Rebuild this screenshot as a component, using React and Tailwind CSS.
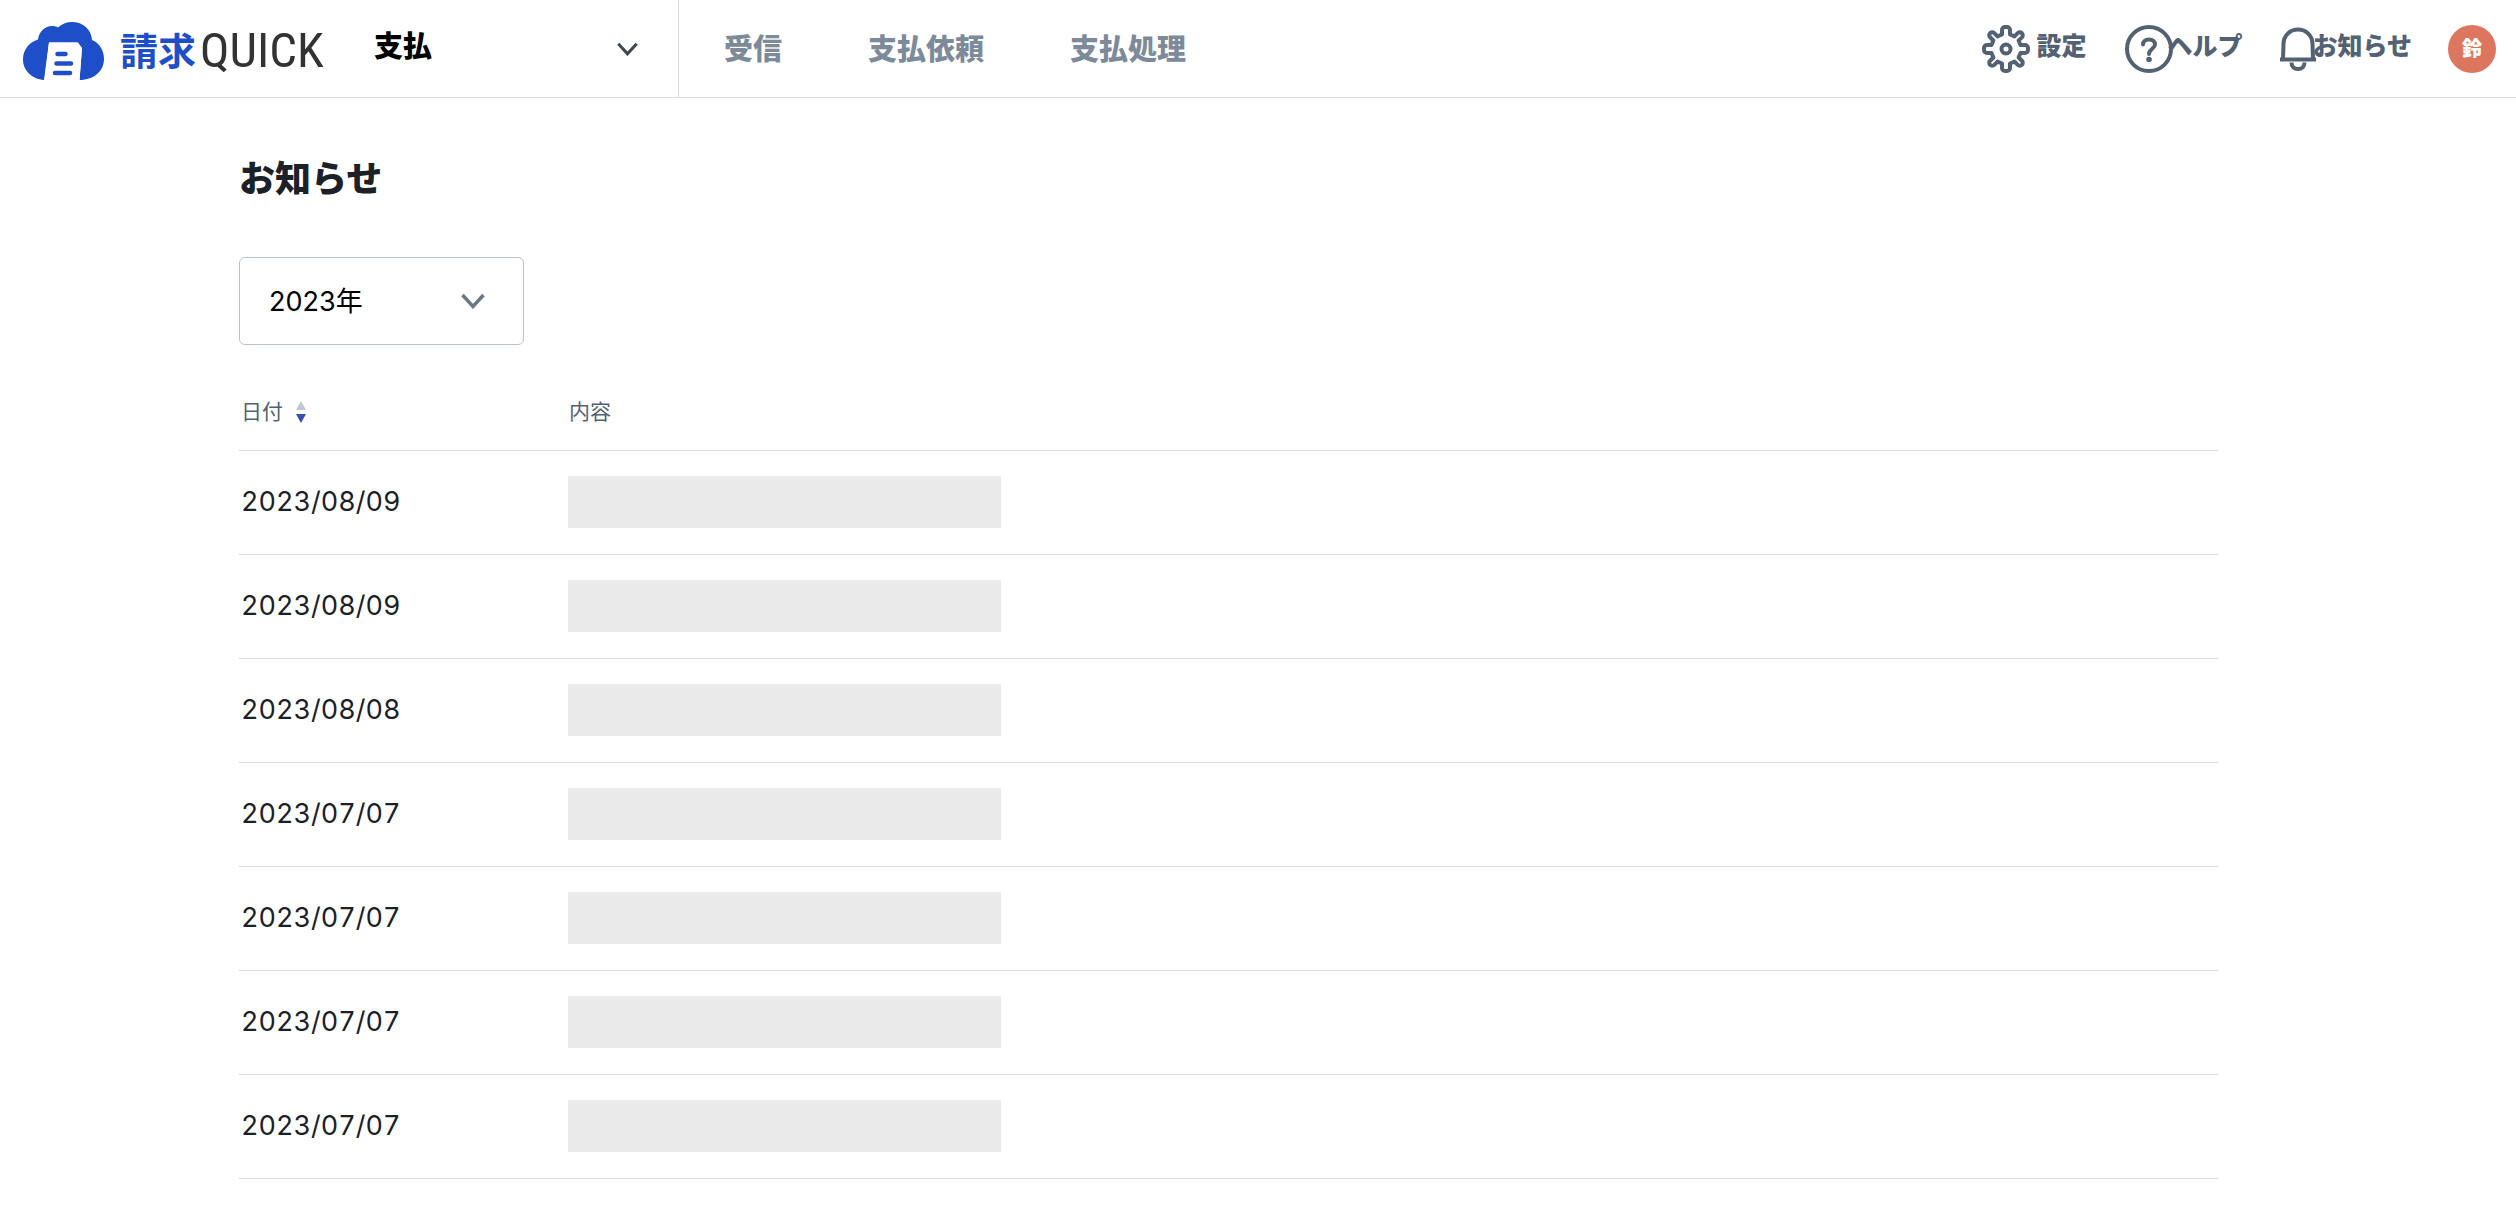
import React, { useMemo, useState } from 'react';

const NEWS = [
  { id: 1, date: '2023/08/09' },
  { id: 2, date: '2023/08/09' },
  { id: 3, date: '2023/08/08' },
  { id: 4, date: '2023/07/07' },
  { id: 5, date: '2023/07/07' },
  { id: 6, date: '2023/07/07' },
  { id: 7, date: '2023/07/07' },
];

const NAV_ITEMS = ['受信', '支払依頼', '支払処理'];

function LogoMark() {
  return (
    <svg viewBox="0 0 81 58" className="h-[58px] w-[81px] shrink-0" aria-hidden="true">
      <path
        d="M21 58C9 57 0 48.500 0 37.500C0 27.500 6.500 20 15 17.500C16 9.500 22 4 29 4C31.500 4 33.500 4.500 35 5.500C38.500 2 43.500 0 49 0C60 0 68.500 7.500 69 18C76.500 21 81 28.500 81 37C81 48.500 71.500 58 56.500 58L59 26L55 20.500H26L21 58Z"
        fill="#1f4fc8"
      />
      <path d="M26 20.500H54L59 26L56.500 58H21.500Z" fill="#fff" />
      <path d="M34.500 32H42.500M33.500 41.500H48M32 51H47" stroke="#1f4fc8" strokeWidth="4.500" strokeLinecap="round" />
    </svg>
  );
}

function ChevronIcon({ className }) {
  return (
    <svg viewBox="0 0 24 16" className={className} fill="none" stroke="currentColor" strokeWidth="3.500" aria-hidden="true">
      <path d="M1.500 2L12 13.500L22.500 2" />
    </svg>
  );
}

function GearIcon() {
  return (
    <svg viewBox="0 0 48 48" className="size-12" fill="none" stroke="currentColor" strokeWidth="4" strokeLinejoin="round" aria-hidden="true">
      <path d="M20 5a3 3 0 0 1 3-3h2a3 3 0 0 1 3 3v4.500l4.500 1.900 3.200-3.200a3 3 0 0 1 4.200 0a3 3 0 0 1 0 4.200L36.600 15.500 38.500 20H43a3 3 0 0 1 3 3v2a3 3 0 0 1-3 3h-4.500l-1.900 4.500 3.300 3.200a3 3 0 0 1 0 4.200a3 3 0 0 1-4.200 0L32.500 36.600 28 38.500V43a3 3 0 0 1-3 3h-2a3 3 0 0 1-3-3v-4.500l-4.500-1.900-3.200 3.300a3 3 0 0 1-4.200 0a3 3 0 0 1 0-4.200L11.400 32.500 9.500 28H5a3 3 0 0 1-3-3v-2a3 3 0 0 1 3-3h4.500l1.900-4.500-3.300-3.200a3 3 0 0 1 0-4.200a3 3 0 0 1 4.200 0L15.500 11.400 20 9.500Z" />
      <circle cx="24" cy="24" r="4.500" />
    </svg>
  );
}

function HelpIcon() {
  return (
    <svg viewBox="0 0 48 48" className="size-12" fill="none" stroke="currentColor" strokeWidth="4" aria-hidden="true">
      <circle cx="24" cy="24" r="22" />
      <path d="M18 19.500C18 16.500 20.500 14.500 24 14.500C27.500 14.500 30 16.500 30 19.500C30 23.500 24 24 24 29" strokeLinecap="round" />
      <circle cx="24" cy="34.500" r="2.800" fill="currentColor" stroke="none" />
    </svg>
  );
}

function BellIcon() {
  return (
    <svg viewBox="0 0 36 44" className="h-11 w-9" fill="none" stroke="currentColor" strokeWidth="4" aria-hidden="true">
      <path d="M0 32.500H36M3 32L3.500 17C3.500 8.500 10 2.500 18 2.500S32.500 8.500 32.500 17L33 32M11.500 35.500C11.500 39.500 14 42 18 42S24.500 39.500 24.500 35.500" />
    </svg>
  );
}

function Header() {
  return (
    <header className="flex h-[98px] items-center border-b border-[#dcdde2]">
      <a href="#" className="ml-[23px] flex items-center gap-4 pt-1 leading-none" aria-label="請求QUICK">
        <LogoMark />
        <span className="flex w-[205px] items-center whitespace-nowrap">
          <span className="text-[38px] font-bold text-[#1f4fc8]">請求</span>
          <span className="ml-1 font-['Roboto_Condensed',Roboto,sans-serif] text-[49px] text-[#333333]">QUICK</span>
        </span>
      </a>

      <div className="relative ml-[49px] flex h-full w-[305px] items-center border-r border-[#dcdde2]">
        <select
          aria-label="サービス"
          className="h-full w-full appearance-none bg-transparent pb-1 text-[29px] font-extrabold text-black outline-none"
        >
          <option>支払</option>
        </select>
        <ChevronIcon className="pointer-events-none absolute right-10 h-[14px] w-[21px] text-[#3f4750]" />
      </div>

      <nav className="ml-[45px] flex gap-[86px] pt-[2px] text-[29px] font-extrabold text-[#7d8a9a]">
        {NAV_ITEMS.map((item) => (
          <a key={item} href="#">
            {item}
          </a>
        ))}
      </nav>

      <div className="ml-auto mr-5 flex items-center text-[25px] font-extrabold text-[#536273]">
        <a href="#" className="flex items-center gap-[6px]">
          <GearIcon />
          <span className="pb-1">設定</span>
        </a>
        <a href="#" className="ml-[39px] flex items-center">
          <HelpIcon />
          <span className="-ml-[6px] pb-1">ヘルプ</span>
        </a>
        <a href="#" className="ml-[38px] flex items-center">
          <BellIcon />
          <span className="-ml-1 pb-1">お知らせ</span>
        </a>
        <button
          type="button"
          className="ml-[36px] flex size-12 items-center justify-center rounded-full bg-[#dd765e] text-[20px] font-extrabold text-white"
        >
          鈴
        </button>
      </div>
    </header>
  );
}

export default function App() {
  const [year, setYear] = useState('2023');
  const [descending, setDescending] = useState(true);

  const rows = useMemo(() => {
    const filtered = NEWS.filter((item) => item.date.startsWith(year));
    return descending ? filtered : [...filtered].reverse();
  }, [year, descending]);

  return (
    <div className="min-h-screen bg-white font-['Inter','Noto_Sans_CJK_JP',sans-serif] text-[#1b2127]">
      <Header />

      <main className="ml-[239px] mr-[298px] pt-14">
        <h1 className="text-[36px] leading-[50px] font-extrabold">お知らせ</h1>

        <div className="relative mt-[53px] flex w-[285px] items-center">
          <select
            aria-label="年"
            value={year}
            onChange={(event) => setYear(event.target.value)}
            className="h-[88px] w-full appearance-none rounded-md border border-[#b9c1d0] bg-white pt-[2px] pl-[29px] text-[27px] text-black"
          >
            <option value="2023">2023年</option>
            <option value="2022">2022年</option>
          </select>
          <ChevronIcon className="pointer-events-none absolute right-[39px] h-4 w-6 text-[#6b7889]" />
        </div>

        <table className="mt-[33px] w-full table-fixed border-collapse text-left">
          <thead>
            <tr className="h-[72px] border-b border-[#d6dce6] text-[21px] text-[#536273]">
              <th scope="col" className="w-[329px] pb-1 pl-[2px] font-normal">
                <button
                  type="button"
                  className="flex items-center gap-[13px]"
                  onClick={() => setDescending(!descending)}
                >
                  日付
                  <svg viewBox="0 0 10 22" className="h-[22px] w-[10px]" aria-hidden="true">
                    <path d="M5 0L10 9H0Z" fill={descending ? '#c2c8d2' : '#3450b0'} />
                    <path d="M0 13H10L5 22Z" fill={descending ? '#3450b0' : '#c2c8d2'} />
                  </svg>
                </button>
              </th>
              <th scope="col" className="pb-1 pl-px font-normal">
                内容
              </th>
            </tr>
          </thead>
          <tbody>
            {rows.map((item) => (
              <tr key={item.id} className="h-[104px] border-b border-[#d9dce4]">
                <td className="pl-[2px] text-[27px] tabular-nums">{item.date}</td>
                <td>
                  <div className="h-[52px] w-[433px] bg-[#eaeaea]" />
                </td>
              </tr>
            ))}
          </tbody>
        </table>
      </main>
    </div>
  );
}
